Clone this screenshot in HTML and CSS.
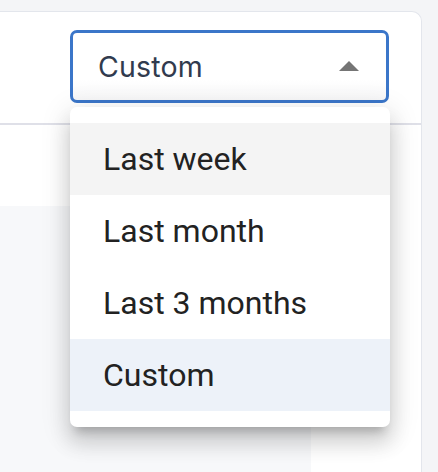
FILE: index.html
```html
<!DOCTYPE html>
<html>
<head>
<meta charset="utf-8">
<link rel="stylesheet" href="styles.css">
</head>
<body>
<div class="page">
  <div class="card">
    <div class="card-header">
      <div class="select-wrap">
        <button class="select">
          <span class="select-value">Custom</span>
          <svg class="caret" width="20" height="10" viewBox="0 0 20 10"><path d="M0 10 L10 0 L20 10 Z" fill="#757575"/></svg>
        </button>
        <ul class="menu">
          <li class="menu-item hover">Last week</li>
          <li class="menu-item">Last month</li>
          <li class="menu-item">Last 3 months</li>
          <li class="menu-item selected">Custom</li>
        </ul>
      </div>
    </div>
    <div class="card-body">
      <div class="chart-area"></div>
    </div>
  </div>
</div>
</body>
</html>
```
FILE: styles.css
```css
html, body {
  margin: 0;
  padding: 0;
  background: #f4f5f7;
  overflow: hidden;
}
.page {
  padding-top: 11px;
  width: 438px;
  height: 472px;
  box-sizing: border-box;
  overflow: hidden;
}
.card {
  margin-left: -12px;
  width: 434px;
  height: 461px;
  box-sizing: border-box;
  background: #fff;
  border: 1.5px solid #e3e6ec;
  border-bottom: none;
  border-radius: 10px 10px 0 0;
  overflow: hidden;
}
.card-header {
  display: flex;
  justify-content: flex-end;
  padding: 18px 32px 20px 0;
  border-bottom: 2px solid #dfe0e8;
}
.select-wrap {
  position: relative;
}
.select {
  display: flex;
  align-items: center;
  justify-content: space-between;
  width: 319px;
  height: 73px;
  box-sizing: border-box;
  padding: 0 27px 0 25px;
  border: 3px solid #3b76c9;
  border-radius: 7px;
  background: linear-gradient(#fff 70%, #f7f7f8);
  font-family: Inter, "Liberation Sans", sans-serif;
  font-size: 28.5px;
  color: #313b4e;
  cursor: pointer;
}
.select-value {
  letter-spacing: 0.2px;
}
.caret {
  display: block;
  margin-top: -1px;
}
.menu {
  position: absolute;
  top: 77px;
  left: 0;
  width: 320px;
  margin: 0;
  padding: 16px 0;
  list-style: none;
  background: #fff;
  border-radius: 7px;
  box-shadow: 0 10px 10px -6px rgba(0,0,0,.2), 0 16px 20px 2px rgba(0,0,0,.12), 0 6px 28px 4px rgba(0,0,0,.10);
  z-index: 5;
}
.menu-item {
  height: 72px;
  display: flex;
  align-items: center;
  padding-left: 33px;
  font-family: Roboto, "Liberation Sans", sans-serif;
  font-size: 32px;
  color: #222;
}
.menu-item.hover {
  background: #f4f4f4;
}
.menu-item.selected {
  background: #edf2f9;
}
.card-body {
  padding-top: 81px;
}
.chart-area {
  width: 322px;
  height: 280px;
  background: #f7f8fa;
}
```
